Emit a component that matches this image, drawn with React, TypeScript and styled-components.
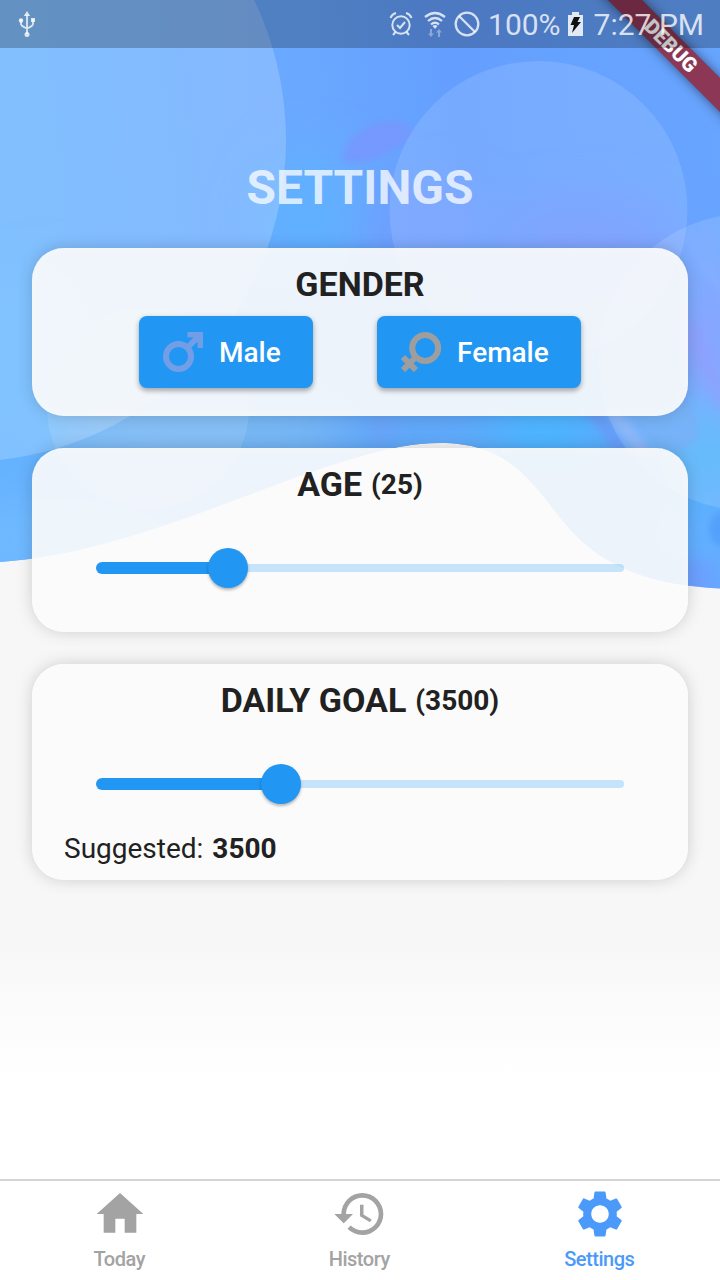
import React from 'react';
import styled, { createGlobalStyle } from 'styled-components';

const Global = createGlobalStyle`
  *{box-sizing:border-box}
  html,body,#root{margin:0;height:100%}
  body{font-family:Roboto,"Liberation Sans",sans-serif;color:#212121;background:#fff;overflow:hidden}
`;

const Screen = styled.div`
  position:relative;width:720px;height:1280px;overflow:hidden;
  display:flex;flex-direction:column;
  background:linear-gradient(#f6f6f6 0,#f7f7f7 940px,#fff 1076px,#fff 100%);
`;
const Backdrop = styled.svg`position:absolute;left:0;top:0;`;
const StatusBar = styled.header`
  position:relative;z-index:2;height:48px;flex:none;background:rgba(0,0,0,.24);
  padding:0 16px;display:flex;align-items:center;justify-content:space-between;
  color:rgba(255,255,255,.78);
`;
const StatusGroup = styled.div`display:flex;align-items:center;`;
const StatusSvg = styled.svg<{ $gap?: number }>`display:block;margin-right:${p => p.$gap ?? 0}px;`;
const StatusText = styled.span<{ $gap?: number }>`
  font-size:30px;line-height:48px;height:46px;white-space:nowrap;
  margin-right:${p => p.$gap ?? 0}px;
`;
const Ribbon = styled.div`
  position:absolute;z-index:1;right:-62px;top:35px;width:220px;height:24px;transform:rotate(45deg);
  background:rgba(150,28,44,.8);box-shadow:0 0 12px rgba(0,0,0,.5);
  color:#fff;text-align:center;font-size:20.4px;line-height:24px;font-weight:900;
  padding-right:3px;
`;
const Content = styled.main`
  position:relative;flex:1;padding:0 32px;display:flex;flex-direction:column;gap:32px;
`;
const PageTitle = styled.h1`
  margin:0;height:168px;padding-top:112px;text-align:center;
  font-size:48px;line-height:56px;font-weight:700;color:rgba(255,255,255,.75);
`;
const Card = styled.section<{ $height: number }>`
  height:${p => p.$height}px;border-radius:32px;background:rgba(251,251,251,.91);
  box-shadow:0 0 16px rgba(0,0,0,.17), inset 0 0 14px rgba(255,255,255,.4);
  padding:16px 32px 0;display:flex;flex-direction:column;
`;
const CardTitle = styled.h2`
  margin:0;display:flex;justify-content:center;align-items:center;gap:9px;
  font-size:34px;line-height:40px;font-weight:700;white-space:pre;
`;
const TitleValue = styled.span`font-size:28px;line-height:38px;padding-top:2px;font-weight:700;`;
const ButtonRow = styled.div`display:flex;justify-content:center;gap:64px;margin-top:12px;`;
const GenderButton = styled.button<{ $width: number }>`
  width:${p => p.$width}px;height:72px;border:0;border-radius:8px;background:#2196f3;color:#fff;
  padding:0 0 0 24px;display:flex;align-items:center;gap:16px;
  font:500 28px Roboto,"Liberation Sans",sans-serif;
  box-shadow:0 3px 5px rgba(0,0,0,.26),0 1px 6px rgba(0,0,0,.1);
`;
const Slider = styled.div`height:48px;margin:40px 32px 0;display:flex;align-items:center;`;
const Active = styled.div`height:12px;border-radius:6px 0 0 6px;background:#2196f3;`;
const Thumb = styled.div`
  width:40px;height:40px;border-radius:50%;background:#2196f3;flex:none;margin:0 -20px;position:relative;
  box-shadow:0 2px 3px rgba(0,0,0,.28);
`;
const Inactive = styled.div`height:8px;flex:1;border-radius:0 4px 4px 0;background:rgba(33,150,243,.24);`;
const Suggested = styled.p`margin:25px 0 0;font-size:28px;line-height:32px;`;
const SuggestedValue = styled.b`margin-left:2px;`;
const TabBar = styled.nav`
  position:relative;height:101px;flex:none;border-top:2px solid #d4d4d4;background:#fff;
  display:grid;grid-template-columns:repeat(3,1fr);
`;
const Tab = styled.div<{ $active?: boolean }>`
  display:flex;flex-direction:column;align-items:center;padding-top:5px;
  color:${p => (p.$active ? '#4b9afa' : '#a3a3a3')};
`;
const TabLabel = styled.span`
  font-size:20px;line-height:24px;margin-top:5px;padding-right:1.5px;font-weight:500;letter-spacing:-.48px;
`;

const ICONS = {
  home: 'M10 20v-6h4v6h5v-8h3L12 3 2 12h3v8z',
  history: 'M13 3a9 9 0 0 0-9 9H1l3.89 3.89.07.14L9 12H6c0-3.87 3.13-7 7-7s7 3.13 7 7-3.13 7-7 7c-1.93 0-3.68-.79-4.94-2.06l-1.42 1.42A8.954 8.954 0 0 0 13 21a9 9 0 0 0 0-18zm-1 5v5l4.28 2.54.72-1.21-3.5-2.08V8H12z',
  settings: 'M19.14 12.94c.04-.3.06-.61.06-.94 0-.32-.02-.64-.07-.94l2.03-1.58c.18-.14.23-.41.12-.61l-1.92-3.32c-.12-.22-.37-.29-.59-.22l-2.39.96c-.5-.38-1.03-.7-1.62-.94l-.36-2.54c-.04-.24-.24-.41-.48-.41h-3.84c-.24 0-.43.17-.47.41l-.36 2.54c-.59.24-1.13.57-1.62.94l-2.39-.96c-.22-.08-.47 0-.59.22L2.74 8.87c-.12.21-.08.47.12.61l2.03 1.58c-.05.3-.09.63-.09.94s.02.64.07.94l-2.03 1.58c-.18.14-.23.41-.12.61l1.92 3.32c.12.22.37.29.59.22l2.39-.96c.5.38 1.03.7 1.62.94l.36 2.54c.05.24.24.41.48.41h3.84c.24 0 .44-.17.47-.41l.36-2.54c.59-.24 1.13-.56 1.62-.94l2.39.96c.22.08.47 0 .59-.22l1.92-3.32c.12-.22.07-.47-.12-.61l-2.01-1.58zM12 15.750c-2.070 0-3.750-1.680-3.750-3.750s1.680-3.750 3.750-3.750 3.750 1.680 3.750 3.750-1.680 3.750-3.750 3.750z',
};

function Waves() {
  return (
    <Backdrop width="720" height="600" viewBox="0 0 720 600">
      <defs>
        <clipPath id="wave">
          <path d="M0 0H720V588.500C655 585 604 570 566 525C532 484 512 443 440 443C330 443 165 550 0 562Z" />
        </clipPath>
        <linearGradient id="sky" x1="0" y1="0.1" x2="1" y2="0">
          <stop offset="0" stopColor="#64b1ff" />
          <stop offset=".42" stopColor="#6aa8ff" />
          <stop offset=".62" stopColor="#649fff" />
          <stop offset="1" stopColor="#68a5ff" />
        </linearGradient>
        <filter id="wide" x="-50%" y="-50%" width="200%" height="200%"><feGaussianBlur stdDeviation="24" /></filter>
        <filter id="medium" x="-50%" y="-50%" width="200%" height="200%"><feGaussianBlur stdDeviation="9" /></filter>
        <filter id="fine" x="-50%" y="-50%" width="200%" height="200%"><feGaussianBlur stdDeviation="3" /></filter>
      </defs>
      <g clipPath="url(#wave)">
        <rect width="720" height="600" fill="url(#sky)" />
        <g filter="url(#wide)">
          <ellipse cx="310" cy="215" rx="55" ry="65" fill="#60b0ff" />
          <ellipse cx="420" cy="225" rx="60" ry="40" fill="#6f9dfe" />
          <ellipse cx="590" cy="240" rx="90" ry="40" fill="#7098ff" />
          <ellipse cx="470" cy="440" rx="190" ry="40" fill="#5ea9f8" />
          <ellipse cx="545" cy="430" rx="60" ry="40" fill="#4cb6ff" />
          <ellipse cx="200" cy="430" rx="150" ry="40" fill="#78b8f2" />
          <ellipse cx="30" cy="360" rx="60" ry="90" fill="#63b6ff" />
          <ellipse cx="60" cy="540" rx="140" ry="45" fill="#70b9ff" />
          <ellipse cx="715" cy="330" rx="22" ry="60" fill="#7b94ff" />
          <ellipse cx="705" cy="455" rx="50" ry="50" fill="#4fb2fb" />
          <ellipse cx="700" cy="540" rx="60" ry="40" fill="#62b0ff" />
        </g>
        <g filter="url(#medium)">
          <ellipse cx="382" cy="428" rx="14" ry="14" fill="#6ba2f7" />
          <ellipse cx="695" cy="575" rx="16" ry="14" fill="#709bff" />
          <path d="M690 320Q700 370 735 410" fill="none" stroke="#858efb" strokeWidth="12" />
        </g>
        <g filter="url(#fine)">
          <path d="M342 161C346 136 370 119 395 121C414 124 416 133 404 143C385 155 360 167 342 161Z" fill="#7499fe" />
          <path d="M590 408Q610 430 624 456" fill="none" stroke="#669ef8" strokeWidth="14" />
          <path d="M610 408Q626 430 648 456" fill="none" stroke="#7aadf9" strokeWidth="13" />
          <path d="M684 400C699 425 700 442 682 447C662 450 640 430 630 405" fill="#62a7f6" stroke="#6b9bf2" strokeWidth="1.500" />
          <path d="M705 230Q712 280 735 320M690 235Q700 265 725 295" fill="none" stroke="#73a3ff" strokeWidth="4" />
          <ellipse cx="722" cy="529" rx="13" ry="17" fill="#53a0fb" />
        </g>
        <circle cx="-36" cy="140" r="322" fill="#fff" fillOpacity=".19" />
        <circle cx="148" cy="408" r="101" fill="#fff" fillOpacity=".1" />
        <circle cx="538.500" cy="210" r="149" fill="#fff" fillOpacity=".12" />
        <circle cx="746" cy="362" r="148" fill="#fff" fillOpacity=".13" />
      </g>
    </Backdrop>
  );
}

function StatusIcons() {
  return (
    <>
      <StatusSvg width="24" height="26" viewBox="0 0 24 26" $gap={7} fill="none" stroke="currentColor" strokeWidth="2">
        <circle cx="12" cy="14" r="8.7" />
        <path d="M8 14l3 3 5-6M6.500 21l-2.500 3M17.500 21l2.500 3M1.500 7Q3 3 7 2M22.500 7Q21 3 17 2" />
      </StatusSvg>
      <StatusSvg width="30" height="28" viewBox="0 0 30 28" $gap={4} fill="none" stroke="currentColor" strokeWidth="2.300">
        <path d="M5 7Q15 -1 25 7M8 11Q15 5 22 11M11 14.500Q15 11 19 14.500" />
        <path d="M12.500 16Q15 14 17.500 16L15 19Z" fill="currentColor" stroke="none" />
        <path d="M10 19v4.500H8L11 27 14 23.500H12V19ZM18 27V22.500H16L19 19 22 22.500H20V27Z" fill="currentColor" stroke="none" opacity=".45" />
      </StatusSvg>
      <StatusSvg width="26" height="26" viewBox="0 0 26 26" $gap={8} fill="none" stroke="currentColor" strokeWidth="2.300">
        <circle cx="13" cy="13" r="11.300" /><path d="M5 5L21 21" />
      </StatusSvg>
    </>
  );
}

function Range({ value }: { value: number }) {
  return (
    <Slider>
      <Active style={{ width: `${value}%` }} />
      <Thumb />
      <Inactive />
    </Slider>
  );
}

function TabIcon({ d }: { d: string }) {
  return <svg width="56" height="56" viewBox="0 0 24 24" fill="currentColor"><path d={d} /></svg>;
}

export default function App() {
  return (
    <>
      <Global />
      <Screen>
        <Waves />
        <StatusBar>
          <StatusSvg width="22" height="28" viewBox="0 0 22 28" fill="none" stroke="currentColor" strokeWidth="1.800">
            <path d="M11 5V24M5 9V14Q5 16 11 18.500Q17 16 17 14V9" />
            <path d="M11 1L14.200 6H7.800Z" fill="currentColor" stroke="none" />
            <circle cx="11" cy="24.500" r="2.500" fill="currentColor" stroke="none" />
            <circle cx="5" cy="10.500" r="2.300" fill="currentColor" stroke="none" />
            <path d="M15 8h4v4h-4z" fill="currentColor" stroke="none" />
          </StatusSvg>
          <StatusGroup>
            <StatusIcons />
            <StatusText $gap={6}>100%</StatusText>
            <StatusSvg width="17" height="25" viewBox="0 0 17 25" $gap={10}>
              <path d="M1 3H5V0H12V3H16V24H1Z" fill="#e2e9f6" />
              <path d="M7 5H13L10.500 10H14L5 21 7 13H3.500Z" fill="#111" />
            </StatusSvg>
            <StatusText>7:27 PM</StatusText>
          </StatusGroup>
        </StatusBar>
        <Content>
          <PageTitle>SETTINGS</PageTitle>
          <Card $height={168}>
            <CardTitle>GENDER</CardTitle>
            <ButtonRow>
              <GenderButton $width={174}>
                <svg width="40" height="40" viewBox="0 0 40 40" fill="none" stroke="#729ee8" strokeWidth="6">
                  <circle cx="15.500" cy="24.500" r="12.500" />
                  <path d="M24.500 15.500L35 5" /><path d="M24.500 2.750H37.250V16" strokeWidth="5.500" />
                </svg>
                Male
              </GenderButton>
              <GenderButton $width={204}>
                <svg width="40" height="40" viewBox="0 0 40 40" fill="none" stroke="#9e9e9e" strokeWidth="6">
                  <circle cx="24.200" cy="16" r="13" />
                  <path d="M15 25L2 38M2 25L15 38" />
                </svg>
                Female
              </GenderButton>
            </ButtonRow>
          </Card>
          <Card $height={184}>
            <CardTitle>AGE<TitleValue>(25)</TitleValue></CardTitle>
            <Range value={25} />
          </Card>
          <Card $height={216}>
            <CardTitle>DAILY GOAL<TitleValue>(3500)</TitleValue></CardTitle>
            <Range value={35} />
            <Suggested>Suggested: <SuggestedValue>3500</SuggestedValue></Suggested>
          </Card>
        </Content>
        <TabBar>
          <Tab><TabIcon d={ICONS.home} /><TabLabel>Today</TabLabel></Tab>
          <Tab><TabIcon d={ICONS.history} /><TabLabel>History</TabLabel></Tab>
          <Tab $active><TabIcon d={ICONS.settings} /><TabLabel>Settings</TabLabel></Tab>
        </TabBar>
        <Ribbon>DEBUG</Ribbon>
      </Screen>
    </>
  );
}
